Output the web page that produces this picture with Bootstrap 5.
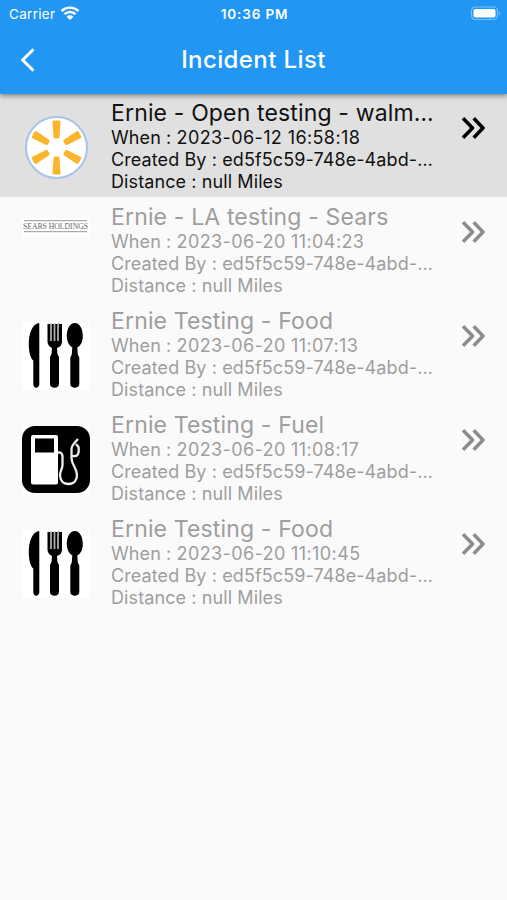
<!DOCTYPE html>
<html lang="en">
<head>
<meta charset="utf-8">
<meta name="viewport" content="width=device-width, initial-scale=1">
<title>Incident List</title>
<link href="https://cdn.jsdelivr.net/npm/bootstrap@5.3.0/dist/css/bootstrap.min.css" rel="stylesheet">
<style>
body{font-family:Inter,"Liberation Sans",sans-serif;background:#fafafa;min-height:900px;color:#111}
.app-head{background:#2196f3;height:93.6px;box-shadow:0 2px 5px rgba(0,0,0,.42);z-index:2}
.status{height:28px;font-size:13.5px;line-height:28px}
.status .carrier{letter-spacing:.3px;padding-left:1px}
.status .clock{font-weight:600;font-size:13.5px;letter-spacing:.85px;margin-right:6px}
.bar{height:64px}
.bar h1{font-size:24px;line-height:64px;font-weight:500;letter-spacing:.4px}
.back{padding-left:20px;flex-basis:0;min-width:0}
.incident{height:103.9px;padding:6.4px 0 0 22px}
.incident.selected{background:#e0e0e0}
.incident.selected .go{color:#000}
.incident:not(.selected){color:#9e9e9e}
.incident:not(.selected) .go{color:#8c8c8c}
.thumb{width:68px;height:68px;margin-top:14px;margin-right:21px}
.info{width:330px}
.name{font-size:23px;line-height:26px;letter-spacing:.15px;margin-bottom:1px}
.line{font-size:18px;line-height:22px;letter-spacing:.1px}
.stamp{letter-spacing:.39px}
.go{width:24px;height:24px;margin:16px 0 0 20px}
</style>
<script src="https://cdn.jsdelivr.net/npm/bootstrap@5.3.0/dist/js/bootstrap.bundle.min.js"></script>
</head>
<body>
<svg width="0" height="0" class="d-none">
  <symbol id="chevrons" viewBox="0 0 24 24"><path d="M2 2.200 11.500 12 2 21.800M12.700 2.200 22 12 12.700 21.800" fill="none" stroke="currentColor" stroke-width="3.500" stroke-linejoin="round"/></symbol>
  <symbol id="food" viewBox="0 0 68 68">
    <rect width="68" height="68" fill="#fff"/>
    <path d="M17 1C10 2 6.800 12 6.800 22c0 8 1.500 14 4.500 16.500V62c0 5 6 5 6 0V2z"/>
    <path d="M25.500 2v17c0 4 2.500 6 4.500 7l-.5 6-1.500 3v27c0 5 9 5 9 0V35l-1.500-3-.5-6c3-1 5-3 5-7V2z"/>
    <path d="M29 1v18M32.500 1v18M36 1v18" stroke="#b4b4b4" stroke-width="1.700"/>
    <path d="M52.800 1c-5 0-8 6-8 13 0 6 3 10 5.500 11.500l-.5 7-1.500 3V62c0 5 9 5 9 0V35.500l-1.500-3-.5-7c3-1.500 5.500-5.500 5.500-11.500C60.800 7 57.800 1 52.800 1z"/>
  </symbol>
</svg>
<header class="app-head position-relative text-white">
  <div class="status d-flex align-items-center">
    <div class="col d-flex align-items-center ps-2">
      <span class="carrier">Carrier</span>
      <svg style="margin-left:5px" width="20" height="16" viewBox="0 0 20 16" fill="none" stroke="#fff" stroke-width="2.400"><path d="M1.500 5a12.500 12.500 0 0 1 17 0M4.500 8.200a8 8 0 0 1 11 0"/><path d="M10 14 6.600 10.700a4.800 4.800 0 0 1 6.800 0z" fill="#fff" stroke="none"/></svg>
    </div>
    <div class="clock">10:36 PM</div>
    <div class="col d-flex justify-content-end">
      <svg width="37" height="16" viewBox="0 0 37 16"><rect x="1.500" y="1" width="26" height="12.500" rx="4" fill="none" stroke="#7cc1fa" stroke-width="1.200"/><rect x="3.500" y="3" width="22" height="8.500" rx="2" fill="#fff"/><path d="M29 5q2.500 2.200 0 4.500z" fill="#7cc1fa"/></svg>
    </div>
  </div>
  <div class="bar d-flex align-items-center">
    <div class="back flex-grow-1 d-flex"><svg width="16" height="24" viewBox="0 0 16 24"><path d="M13.500 1.200 2.700 12l10.800 10.800" fill="none" stroke="#fff" stroke-width="3"/></svg></div>
    <h1 class="m-0">Incident List</h1>
    <div class="back flex-grow-1"></div>
  </div>
</header>
<main>
  <article class="incident selected d-flex align-items-start">
    <svg class="thumb flex-shrink-0" viewBox="0 0 68 68"><circle cx="34.500" cy="33.500" r="30.500" fill="#fff" stroke="#a9c3ea" stroke-width="2"/>
      <g fill="#fbb52d" stroke="#fbb52d" stroke-width="3" stroke-linejoin="round"><path id="ray" d="M32 8h5l-1 15h-3z"/><use href="#ray" transform="rotate(60 34.500 33.500)"/><use href="#ray" transform="rotate(120 34.500 33.500)"/><use href="#ray" transform="rotate(180 34.500 33.500)"/><use href="#ray" transform="rotate(240 34.500 33.500)"/><use href="#ray" transform="rotate(300 34.500 33.500)"/></g></svg>
    <div class="info"><div class="name text-nowrap">Ernie - Open testing - walm…</div><div class="line">When : <span class="stamp">2023-06-12 16:58:18</span></div><div class="line text-nowrap">Created By : ed5f5c59-748e-4abd-…</div><div class="line">Distance : null Miles</div></div>
    <svg class="go flex-shrink-0"><use href="#chevrons"/></svg>
  </article>
  <article class="incident d-flex align-items-start">
    <svg class="thumb flex-shrink-0" viewBox="0 0 68 68"><rect width="68" height="19" fill="#fff"/><path d="M2 2.700h63M2 13.700h63" stroke="#aaa" stroke-width="1.200"/><text x="1" y="11" textLength="65" lengthAdjust="spacingAndGlyphs" font-family="Liberation Serif,serif" font-size="8" fill="#666">SEARS HOLDINGS</text></svg>
    <div class="info"><div class="name text-nowrap">Ernie - LA testing - Sears</div><div class="line">When : <span class="stamp">2023-06-20 11:04:23</span></div><div class="line text-nowrap">Created By : ed5f5c59-748e-4abd-…</div><div class="line">Distance : null Miles</div></div>
    <svg class="go flex-shrink-0"><use href="#chevrons"/></svg>
  </article>
  <article class="incident d-flex align-items-start">
    <svg class="thumb flex-shrink-0"><use href="#food"/></svg>
    <div class="info"><div class="name text-nowrap">Ernie Testing - Food</div><div class="line">When : <span class="stamp">2023-06-20 11:07:13</span></div><div class="line text-nowrap">Created By : ed5f5c59-748e-4abd-…</div><div class="line">Distance : null Miles</div></div>
    <svg class="go flex-shrink-0"><use href="#chevrons"/></svg>
  </article>
  <article class="incident d-flex align-items-start">
    <svg class="thumb flex-shrink-0" viewBox="0 0 68 68"><rect width="68" height="68" fill="#fff"/><rect width="68" height="67" rx="13" fill="#000"/><rect x="9" y="9" width="27" height="49.500" rx="2" fill="#fff"/><rect x="13" y="12.500" width="19" height="14" fill="#000"/><path d="M36 26.500h2q2.500 1 2.500 4V39c0 4-2.500 6-2.500 10 0 5 3 9 8.500 9s8.500-4 8.500-9c0-7-5.500-10-5.500-17v-9c0-4 3-6 6.500-10M50.500 30c5 1 7-2 6-9l-2.500-3" fill="none" stroke="#eee" stroke-width="2.300"/></svg>
    <div class="info"><div class="name text-nowrap">Ernie Testing - Fuel</div><div class="line">When : <span class="stamp">2023-06-20 11:08:17</span></div><div class="line text-nowrap">Created By : ed5f5c59-748e-4abd-…</div><div class="line">Distance : null Miles</div></div>
    <svg class="go flex-shrink-0"><use href="#chevrons"/></svg>
  </article>
  <article class="incident d-flex align-items-start">
    <svg class="thumb flex-shrink-0"><use href="#food"/></svg>
    <div class="info"><div class="name text-nowrap">Ernie Testing - Food</div><div class="line">When : <span class="stamp">2023-06-20 11:10:45</span></div><div class="line text-nowrap">Created By : ed5f5c59-748e-4abd-…</div><div class="line">Distance : null Miles</div></div>
    <svg class="go flex-shrink-0"><use href="#chevrons"/></svg>
  </article>
</main>
</body>
</html>
